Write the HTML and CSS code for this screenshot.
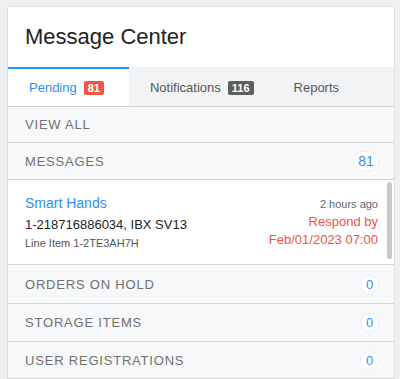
FILE: index.html
```html
<!DOCTYPE html>
<html lang="en">
<head>
    <meta charset="UTF-8">
    <meta name="viewport" content="width=device-width, initial-scale=1.0">
    <title>Message Center</title>
    <link rel="stylesheet" href="styles.css">
</head>
<body>
    <div class="card">
        <div class="card-header">
            <h1>Message Center</h1>
        </div>

        <div class="tabs">
            <div class="tab active">Pending <span class="tab-badge red">81</span></div>
            <div class="tab">Notifications <span class="tab-badge dark">116</span></div>
            <div class="tab last">Reports</div>
        </div>

        <div class="row view-all">VIEW ALL</div>
        <div class="row messages">
            <span>MESSAGES</span>
            <span class="count wide">81</span>
        </div>

        <div class="message-list">
            <div class="message">
                <div class="message-left">
                    <div class="message-title">Smart Hands</div>
                    <div class="message-id">1-218716886034, IBX SV13</div>
                    <div class="message-line">Line Item 1-2TE3AH7H</div>
                </div>
                <div class="message-right">
                    <div class="message-time">2 hours ago</div>
                    <div class="message-due">Respond by</div>
                    <div class="message-date">Feb/01/2023 07:00</div>
                </div>
            </div>
            <!-- scrollbar of the list -->
            <div class="scroll-track">
                <div class="scroll-thumb"></div>
            </div>
        </div>

        <div class="row orders">
            <span>ORDERS ON HOLD</span>
            <span class="count">0</span>
        </div>
        <div class="row storage">
            <span>STORAGE ITEMS</span>
            <span class="count">0</span>
        </div>
        <div class="row users">
            <span>USER REGISTRATIONS</span>
            <span class="count">0</span>
        </div>
    </div>
</body>
</html>
```

FILE: styles.css
```css
body {
    margin: 0;
    padding: 6px 5px 0 7px;
    background-color: #eff0f2;
    font-family: "Liberation Sans", Arial, sans-serif;
    height: 379px;
    overflow: hidden;
    box-sizing: border-box;
}

.card {
    width: 388px;
    background-color: #f7f8fa;
    border: 1px solid #dfe1e4;
    box-sizing: border-box;
}

.card-header {
    height: 60px;
    background-color: #fff;
    padding-left: 17px;
    display: flex;
    align-items: center;
}

h1 {
    margin: 0;
    font-size: 22px;
    font-weight: normal;
    color: #222;
}

/* tabs */
.tabs {
    display: flex;
    height: 39px;
    background-color: #f2f3f5;
    border-bottom: 1px solid #d3d4d6;
}

.tab {
    display: flex;
    align-items: center;
    gap: 7px;
    padding: 0 25px 0 21px;
    font-size: 13px;
    color: #555;
    box-sizing: border-box;
    border-top: 2px solid transparent;
}

.tab.active {
    background-color: #fff;
    color: #2f8ff0;
    border-top-color: #2196f3;
}

.tab.last {
    padding-left: 15px;
}

.tab-badge {
    display: inline-block;
    height: 14px;
    line-height: 14px;
    padding: 0 4px;
    border-radius: 2px;
    font-size: 11px;
    font-weight: bold;
    color: #fff;
}

.tab-badge.red {
    background-color: #f1553f;
}

.tab-badge.dark {
    background-color: #5e5e5e;
}

/* rows */
.row {
    display: flex;
    align-items: center;
    justify-content: space-between;
    height: 36px;
    padding: 0 15px 0 17px;
    border-bottom: 1px solid #d3d4d6;
    font-size: 13px;
    letter-spacing: 0.8px;
    color: #707070;
}

.row.view-all {
    height: 35px;
}

.row.orders {
    height: 38px;
}

.row.storage {
    height: 37px;
}

.row.users {
    height: 36px;
}

.count {
    width: 19px;
    height: 19px;
    border-radius: 10px;
    background-color: #fff;
    border: 1px solid #eceef1;
    box-sizing: border-box;
    display: flex;
    align-items: center;
    justify-content: center;
    font-size: 13px;
    letter-spacing: 0;
    color: #2f8ff0;
}

.count.wide {
    width: 26px;
    height: 20px;
    font-size: 14px;
}

/* message list */
.message-list {
    display: flex;
    height: 84px;
    overflow: hidden;
    background-color: #fff;
    border-bottom: 1px solid #d3d4d6;
}

.message {
    flex: 1;
    display: flex;
    justify-content: space-between;
    padding: 13px 7px 16px 17px;
}

.scroll-track {
    width: 9px;
    padding: 2px 2px 0 2px;
    box-sizing: border-box;
}

.scroll-thumb {
    height: 77px;
    border-radius: 3px;
    background-color: #c8c8c8;
}

.message-title {
    font-size: 14px;
    line-height: 20px;
    color: #2f8ff0;
}

.message-id {
    margin-top: 2px;
    font-size: 13px;
    line-height: 20px;
    color: #222;
}

.message-line {
    font-size: 11px;
    line-height: 16px;
    color: #555;
}

.message-right {
    text-align: right;
}

.message-time {
    margin-top: 1px;
    font-size: 11px;
    line-height: 20px;
    color: #666;
}

.message-due {
    font-size: 13px;
    line-height: 16px;
    color: #f0533f;
}

.message-date {
    font-size: 13px;
    line-height: 20px;
    color: #f0533f;
}
```
